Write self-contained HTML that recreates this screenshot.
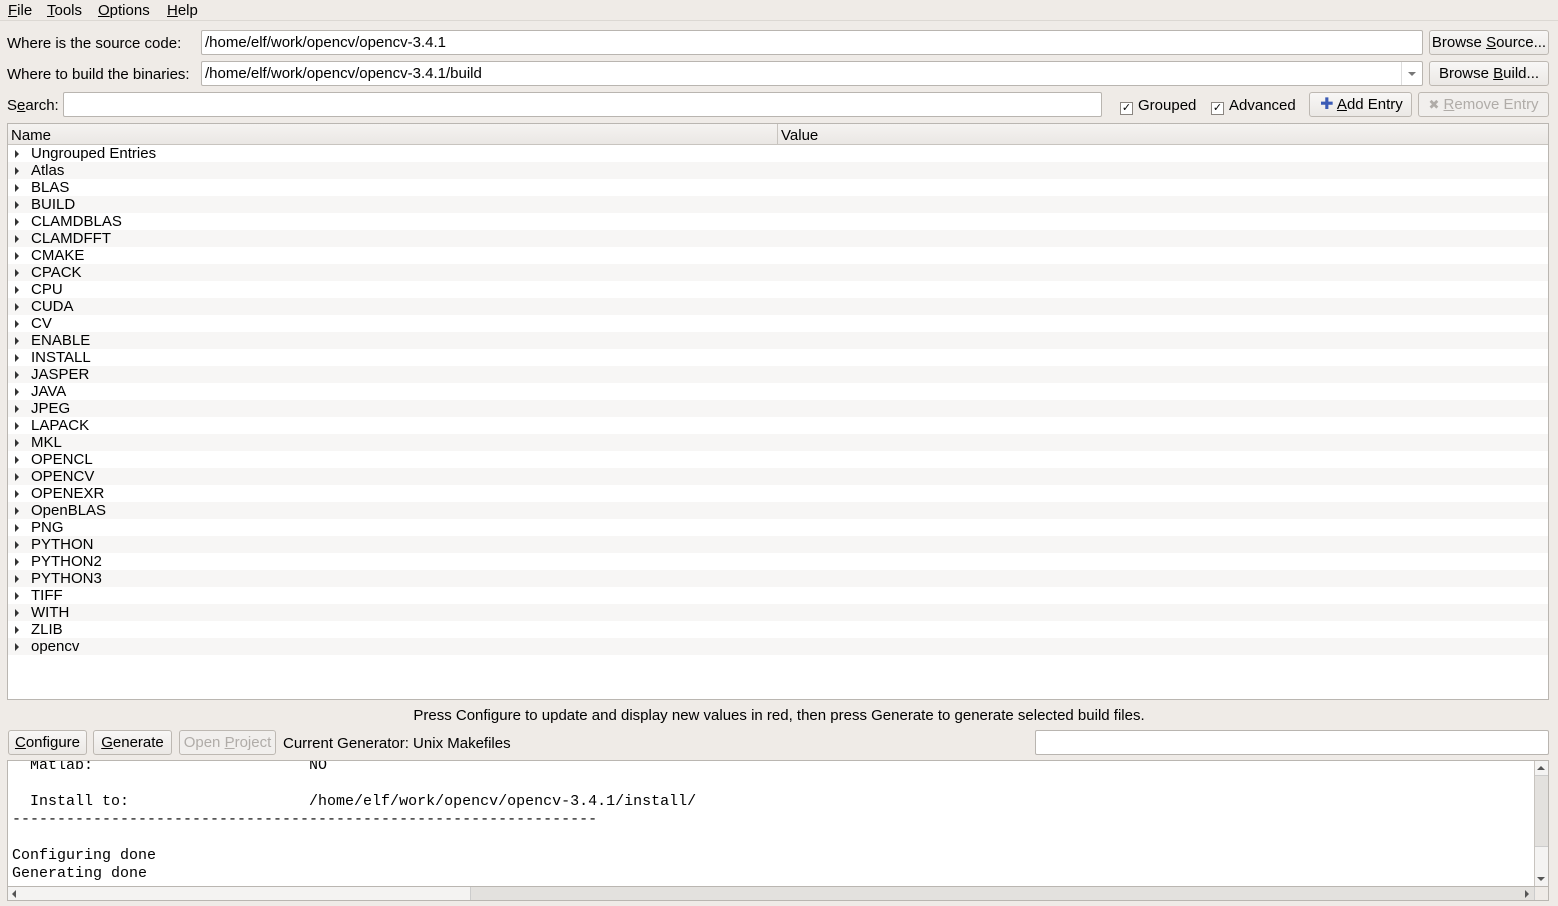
<!DOCTYPE html>
<html><head><style>
*{box-sizing:border-box;margin:0;padding:0}
body{width:1558px;height:906px;background:#efebe7;font-family:"Liberation Sans","DejaVu Sans",sans-serif;font-size:15px;color:#000;position:relative;overflow:hidden}
.a{position:absolute;white-space:nowrap}
u{text-decoration:underline}
.inp{position:absolute;background:#fff;border:1px solid #b9b5b0;border-radius:2px;padding-left:3px;line-height:23px;font-size:15px}
.btn{position:absolute;border:1px solid #bdb8b2;border-radius:3px;background:linear-gradient(#f8f7f6,#ebe8e5);text-align:center;line-height:24px;font-size:15px;white-space:nowrap}
.row{position:absolute;left:8px;width:1540px;height:17px;line-height:18px}
.row span{position:absolute;left:23px}
.row i{position:absolute;left:7px;top:5px;width:0;height:0;border-left:4px solid #333;border-top:4px solid transparent;border-bottom:4px solid transparent}
.mono{font-family:"Liberation Mono",monospace;font-size:15px;position:absolute;left:4px;white-space:pre;line-height:18px}
.cb{display:inline-block;width:13px;height:13px;border:1px solid #8a8580;background:#fff;font-size:11px;line-height:11px;text-align:center;vertical-align:-1px;margin-right:5px}
</style></head><body>
<div class="a" style="left:8px;top:2px;line-height:18px"><u>F</u>ile</div>
<div class="a" style="left:47px;top:2px;line-height:18px"><u>T</u>ools</div>
<div class="a" style="left:98px;top:2px;line-height:18px"><u>O</u>ptions</div>
<div class="a" style="left:167px;top:2px;line-height:18px"><u>H</u>elp</div>
<div class="a" style="left:0;top:20px;width:1558px;height:1px;background:#dcd8d3"></div>
<div class="a" style="left:7px;top:35px">Where is the source code:</div>
<div class="inp" style="left:201px;top:30px;width:1222px;height:25px">/home/elf/work/opencv/opencv-3.4.1</div>
<div class="btn" style="left:1429px;top:30px;width:120px;height:25px">Browse <u>S</u>ource...</div>
<div class="a" style="left:7px;top:66px">Where to build the binaries:</div>
<div class="inp" style="left:201px;top:61px;width:1222px;height:25px">/home/elf/work/opencv/opencv-3.4.1/build</div>
<div class="a" style="left:1401px;top:62px;width:1px;height:23px;background:#ddd"></div>
<div class="a" style="left:1408px;top:72px;border-left:4px solid transparent;border-right:4px solid transparent;border-top:4px solid #777"></div>
<div class="btn" style="left:1429px;top:61px;width:120px;height:25px">Browse <u>B</u>uild...</div>
<div class="a" style="left:7px;top:97px">S<u>e</u>arch:</div>
<div class="inp" style="left:63px;top:92px;width:1039px;height:25px"></div>
<div class="a" style="left:1120px;top:97px"><span class="cb">✓</span>Grouped</div>
<div class="a" style="left:1211px;top:97px"><span class="cb">✓</span>Advanced</div>
<div class="btn" style="left:1309px;top:92px;width:103px;height:25px;padding-left:2px"><span style="color:#3b5bb5;font-weight:bold;font-size:16px">✚</span> <u>A</u>dd Entry</div>
<div class="btn" style="left:1418px;top:92px;width:131px;height:25px;color:#b0aca8;background:#f1efed"><span style="font-size:13px">✖</span> <u>R</u>emove Entry</div>
<div class="a" style="left:7px;top:123px;width:1542px;height:577px;background:#fff;border:1px solid #bab6b1"></div>
<div class="a" style="left:8px;top:124px;width:1540px;height:21px;background:linear-gradient(#f5f3f1,#eae7e4);border-bottom:1px solid #c8c4bf"></div>
<div class="a" style="left:11px;top:127px">Name</div>
<div class="a" style="left:777px;top:124px;width:1px;height:20px;background:#c8c4bf"></div>
<div class="a" style="left:781px;top:127px">Value</div>
<div id="rows"></div>
<div class="a" style="left:0;top:707px;width:1558px;text-align:center">Press Configure to update and display new values in red, then press Generate to generate selected build files.</div>
<div class="btn" style="left:8px;top:730px;width:79px;height:25px"><u>C</u>onfigure</div>
<div class="btn" style="left:93px;top:730px;width:79px;height:25px"><u>G</u>enerate</div>
<div class="btn" style="left:179px;top:730px;width:97px;height:25px;color:#b0aca8;background:#f1efed">Open <u>P</u>roject</div>
<div class="a" style="left:283px;top:735px">Current Generator: Unix Makefiles</div>
<div class="inp" style="left:1035px;top:730px;width:514px;height:25px"></div>
<div class="a" style="left:7px;top:760px;width:1542px;height:141px;background:#fff;border:1px solid #bab6b1;overflow:hidden">
<div class="mono" style="top:-4px">  Matlab:                        NO

  Install to:                    /home/elf/work/opencv/opencv-3.4.1/install/
-----------------------------------------------------------------

Configuring done
Generating done</div>
<div class="a" style="left:1526px;top:0;width:15px;height:126px;background:#f4f3f2;border-left:1px solid #c8c4bf"></div>
<div class="a" style="left:1527px;top:14px;width:14px;height:72px;background:#e3e1de;border-top:1px solid #ccc;border-bottom:1px solid #ccc"></div>
<div class="a" style="left:1529px;top:5px;border-left:4px solid transparent;border-right:4px solid transparent;border-bottom:4px solid #555"></div>
<div class="a" style="left:1529px;top:116px;border-left:4px solid transparent;border-right:4px solid transparent;border-top:4px solid #555"></div>
<div class="a" style="left:0;top:125px;width:1541px;height:15px;background:#e3e1de;border-top:1px solid #bab6b1"></div>
<div class="a" style="left:0;top:126px;width:463px;height:14px;background:#f4f3f2;border-right:1px solid #ccc"></div>
<div class="a" style="left:4px;top:129px;border-top:4px solid transparent;border-bottom:4px solid transparent;border-right:4px solid #555"></div>
<div class="a" style="left:1517px;top:129px;border-top:4px solid transparent;border-bottom:4px solid transparent;border-left:4px solid #555"></div>
<div class="a" style="left:1526px;top:126px;width:15px;height:14px;background:#efebe7;border-left:1px solid #ccc"></div>
</div>
<script>
var n=["Ungrouped Entries","Atlas","BLAS","BUILD","CLAMDBLAS","CLAMDFFT","CMAKE","CPACK","CPU","CUDA","CV","ENABLE","INSTALL","JASPER","JAVA","JPEG","LAPACK","MKL","OPENCL","OPENCV","OPENEXR","OpenBLAS","PNG","PYTHON","PYTHON2","PYTHON3","TIFF","WITH","ZLIB","opencv"];
var h="";n.forEach(function(t,i){h+='<div class="row" style="top:'+(145+i*17)+'px;background:'+(i%2?'#f7f6f5':'#fff')+'"><i></i><span>'+t+'</span></div>';});
document.getElementById("rows").innerHTML=h;
</script>
</body></html>
